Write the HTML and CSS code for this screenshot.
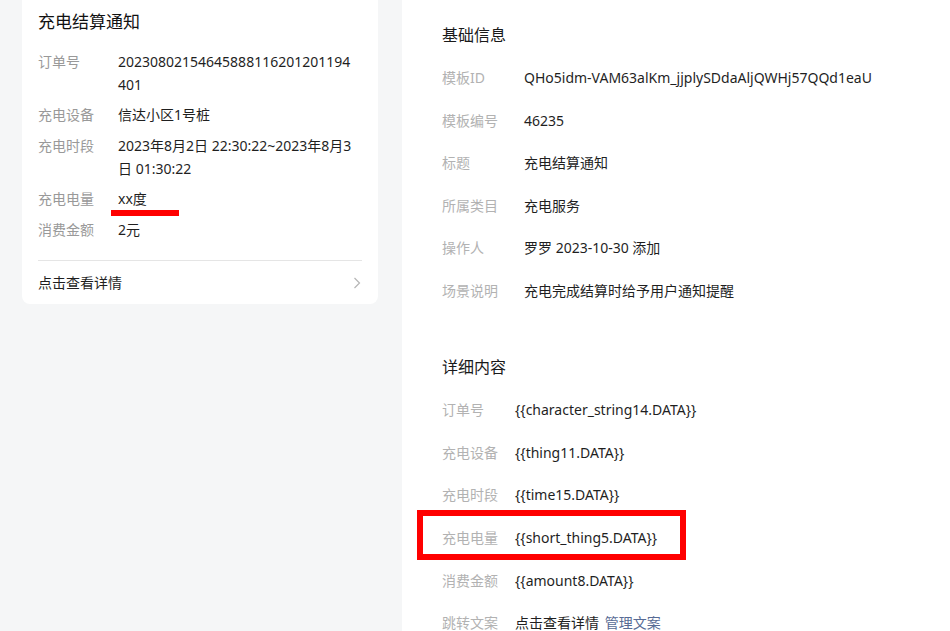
FILE: index.html
```html
<!DOCTYPE html>
<html>
<head>
  <meta charset="utf-8">
  <title>充电结算通知</title>
  <meta name="viewport" content="width=device-width, initial-scale=1">
  <link rel="stylesheet" href="styles.css">
</head>
<body>
  <div class="page">
    <div class="preview">
      <div class="card">
        <h3 class="card-title">充电结算通知</h3>
        <div class="card-rows">
          <div class="card-row"><span class="k">订单号</span><span class="v">20230802154645888116201201194401</span></div>
          <div class="card-row"><span class="k">充电设备</span><span class="v">信达小区1号桩</span></div>
          <div class="card-row"><span class="k">充电时段</span><span class="v">2023年8月2日 22:30:22~2023年8月3日 01:30:22</span></div>
          <div class="card-row"><span class="k">充电电量</span><span class="v"><span class="underline">xx度</span></span></div>
          <div class="card-row"><span class="k">消费金额</span><span class="v">2元</span></div>
        </div>
        <div class="card-foot">
          <span>点击查看详情</span>
          <svg class="arrow" width="8" height="12" viewBox="0 0 8 12"><polyline points="1.5,1 6.5,6 1.5,11" fill="none" stroke="#b5b5b5" stroke-width="1.2"/></svg>
        </div>
      </div>
    </div>

    <div class="info">
      <div class="block">
        <h4 class="block-title">基础信息</h4>
        <div class="row"><span class="label">模板ID</span><span class="val">QHo5idm-VAM63alKm_jjplySDdaAljQWHj57QQd1eaU</span></div>
        <div class="row"><span class="label">模板编号</span><span class="val">46235</span></div>
        <div class="row"><span class="label">标题</span><span class="val">充电结算通知</span></div>
        <div class="row"><span class="label">所属类目</span><span class="val">充电服务</span></div>
        <div class="row"><span class="label">操作人</span><span class="val">罗罗 2023-10-30 添加</span></div>
        <div class="row"><span class="label">场景说明</span><span class="val">充电完成结算时给予用户通知提醒</span></div>
      </div>

      <div class="block detail">
        <h4 class="block-title">详细内容</h4>
        <div class="row"><span class="label">订单号</span><span class="val">{{character_string14.DATA}}</span></div>
        <div class="row"><span class="label">充电设备</span><span class="val">{{thing11.DATA}}</span></div>
        <div class="row"><span class="label">充电时段</span><span class="val">{{time15.DATA}}</span></div>
        <div class="row boxed"><span class="label">充电电量</span><span class="val">{{short_thing5.DATA}}</span></div>
        <div class="row"><span class="label">消费金额</span><span class="val">{{amount8.DATA}}</span></div>
        <div class="row"><span class="label">跳转文案</span><span class="val">点击查看详情 <a class="link" href="#">管理文案</a></span></div>
      </div>
    </div>
  </div>
</body>
</html>
```

FILE: styles.css
```css
html, body { margin: 0; height: 100%; overflow: hidden; }
body { font-family: "Noto Sans", "Noto Sans CJK SC", sans-serif; font-size: 14px; color: #1f1f1f; background: #f5f6f7; }
.page { display: flex; height: 100%; }

.preview { width: 356px; padding: 0 24px 0 22px; flex-shrink: 0; }
.card { background: #fff; border-radius: 0 0 8px 8px; margin-top: -10px; padding: 20px 16px 10px; }
.card-title { margin: 0; font-size: 17px; font-weight: normal; line-height: 24px; color: #111; }
.card-rows { display: flex; flex-direction: column; gap: 7.5px; margin-top: 15.5px; }
.card-row { display: flex; line-height: 23px; }
.card-row .k { width: 80px; flex-shrink: 0; color: #999; }
.card-row .v { width: 236px; word-break: break-all; }
.underline { position: relative; }
.underline::after { content: ""; position: absolute; left: -7px; top: 21px; width: 68px; height: 6px; background: #ff0000; }
.card-foot { display: flex; justify-content: space-between; align-items: center; margin-top: 19.5px; padding-top: 11px; border-top: 1px solid #e5e5e5; line-height: 22px; }
.arrow { margin-right: 1px; }

.info { flex: 1; background: #fff; padding: 23px 40px 0; }
.block-title { margin: 0 0 10px; font-size: 16px; font-weight: normal; line-height: 24px; color: #1a1a1a; }
.row { display: flex; padding: 10px 0; line-height: 22.6px; }
.row .label { width: 82px; flex-shrink: 0; color: #b2b2b2; }
.detail { margin-top: 42.7px; }
.detail .row .label { width: 73px; }
.boxed { position: relative; }
.boxed::after { content: ""; position: absolute; left: -25px; top: -7.5px; width: 257px; height: 38px; border: 6px solid #ff0000; }
.link { color: #576b95; text-decoration: none; margin-left: 2px; }
```
